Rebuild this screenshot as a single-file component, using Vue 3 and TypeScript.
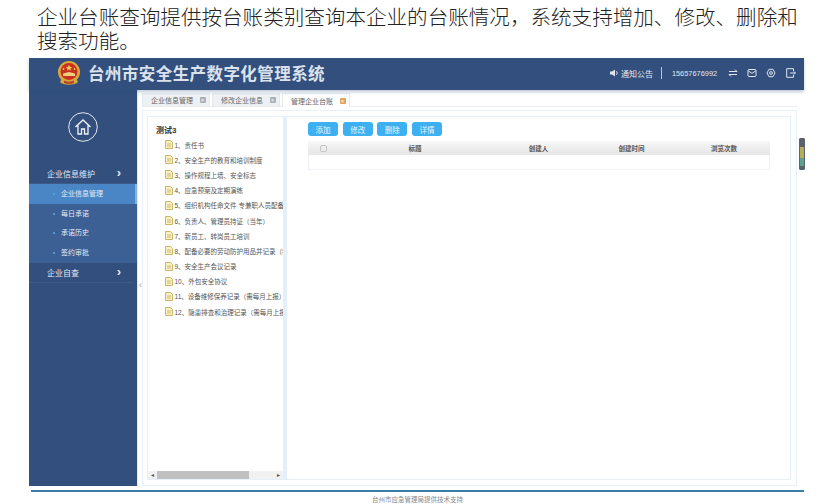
<template>
  <div class="page">
    <p class="intro">企业台账查询提供按台账类别查询本企业的台账情况，系统支持增加、修改、删除和搜索功能。</p>

    <div class="app">
      <header class="topbar">
        <div class="brand">
          <svg class="emblem" width="24" height="25" viewBox="0 0 24 25">
            <path d="M3 21c2.500 3.500 15.500 3.500 18 0l-1-2H4z" fill="#d8a63c" />
            <circle cx="12" cy="11" r="11" fill="#d9a93f" />
            <circle cx="12" cy="10.500" r="8.500" fill="#c8301f" />
            <path d="M12 3.500l.9 2.400h2.500l-2 1.500.8 2.400-2.200-1.500-2.200 1.500.8-2.400-2-1.500h2.500z" fill="#f2cf5a" />
            <circle cx="6.500" cy="8" r=".9" fill="#f2cf5a" />
            <circle cx="17.500" cy="8" r=".9" fill="#f2cf5a" />
            <path d="M6 15v-2.500l6-1.500 6 1.500V15z" fill="#efd07a" />
            <path d="M7 19.500c3 1.500 7 1.500 10 0v2.500c-3 1.200-7 1.200-10 0z" fill="#b8452c" />
          </svg>
          <span class="brand-name">台州市安全生产数字化管理系统</span>
        </div>
        <div class="tools">
          <svg class="tool-icon" width="10" height="10" viewBox="0 0 10 10">
            <path d="M1 3.500h2L6 1.500v7L3 6.500H1z" fill="#dfe6f0" />
            <path d="M7.500 3.200c.8 1 .8 2.600 0 3.600" stroke="#dfe6f0" fill="none" />
          </svg>
          <span class="notice">通知公告</span>
          <span class="sep"></span>
          <span class="phone">15657676992</span>
          <svg class="tool-icon" width="10" height="10" viewBox="0 0 10 10">
            <path d="M1 3.500h8L7 1.500M9 6.500H1l2 2" stroke="#dfe6f0" fill="none" />
          </svg>
          <svg class="tool-icon" width="10" height="10" viewBox="0 0 10 10">
            <rect x="1" y="1.500" width="8" height="7" rx="1" stroke="#dfe6f0" fill="none" />
            <path d="M1.500 3l3.500 2.400L8.500 3" stroke="#dfe6f0" fill="none" />
          </svg>
          <svg class="tool-icon" width="10" height="10" viewBox="0 0 10 10">
            <path d="M3 1.300h4L9 5 7 8.700H3L1 5z" stroke="#dfe6f0" fill="none" />
            <circle cx="5" cy="5" r="1.400" stroke="#dfe6f0" fill="none" />
          </svg>
          <svg class="tool-icon" width="10" height="10" viewBox="0 0 10 10">
            <path d="M7.500 3V.700H.700v8.600h6.800V7M4 5h5.400M7.800 3.400 9.400 5 7.800 6.600" stroke="#dfe6f0" fill="none" />
          </svg>
        </div>
      </header>

      <div class="body">
        <aside class="sidebar">
          <div class="home">
            <svg width="30" height="30" viewBox="0 0 30 30">
              <circle cx="15" cy="15" r="14.300" stroke="#e4e9f1" fill="none" />
              <path d="M7.500 15 15 8l7.500 7M10 13.500V22h3.500v-5h3v5H20v-8.500" stroke="#f2f5f9" stroke-width="1.300" fill="none" />
            </svg>
          </div>
          <div class="group">
            <span>企业信息维护</span>
            <span class="chevron">›</span>
          </div>
          <ul class="submenu">
            <li v-for="item in subItems" :key="item" :class="{ active: item === '企业信息管理' }">{{ item }}</li>
          </ul>
          <div class="group group-last">
            <span>企业自查</span>
            <span class="chevron">›</span>
          </div>
        </aside>

        <main class="content">
          <div class="collapse">‹</div>
          <div class="tabs">
            <div v-for="tab in tabs" :key="tab" class="tab" :class="{ current: tab === '管理企业台账' }">
              <span>{{ tab }}</span>
              <i class="tab-close">×</i>
            </div>
          </div>

          <div class="outer">
            <section class="tree">
              <div class="tree-list">
                <div class="tree-root">测试3</div>
                <div v-for="row in ledgers" :key="row" class="tree-row">
                  <svg width="8" height="9" viewBox="0 0 8 9">
                    <path d="M.5.500h5L7.500 2.500v6H.500z" fill="#f9f2c0" stroke="#c9b66a" />
                    <path d="M2 4h4M2 6h4" stroke="#c9b97a" />
                  </svg>
                  <span>{{ row }}</span>
                </div>
              </div>
              <div class="hscroll">
                <span class="arrow">◂</span>
                <span class="track"><span class="thumb"></span></span>
                <span class="arrow">▸</span>
              </div>
            </section>

            <section class="records">
              <div class="actions">
                <button v-for="a in actions" :key="a" type="button">{{ a }}</button>
              </div>
              <div class="table">
                <div class="thead">
                  <span><i class="check"></i></span>
                  <span v-for="c in columns" :key="c">{{ c }}</span>
                </div>
                <div class="tbody"></div>
              </div>
            </section>
          </div>
        </main>
      </div>
      <div class="handle"></div>
    </div>

    <footer class="foot">台州市应急管理局提供技术支持</footer>
  </div>
</template>

<script setup lang="ts">
const subItems: string[] = ['企业信息管理', '每日承诺', '承诺历史', '签约审批'];
const tabs: string[] = ['企业信息管理', '修改企业信息', '管理企业台账'];
const actions: string[] = ['添加', '修改', '删除', '详情'];
const columns: string[] = ['标题', '创建人', '创建时间', '浏览次数'];
const ledgers: string[] = [
  '1、责任书',
  '2、安全生产的教育和培训制度',
  '3、操作规程上墙、安全标志',
  '4、应急预案及定期演练',
  '5、组织机构任命文件 专兼职人员配备',
  '6、负责人、管理员持证（当年）',
  '7、新员工、转岗员工培训',
  '8、配备必要的劳动防护用品并记录（每',
  '9、安全生产会议记录',
  '10、外包安全协议',
  '11、设备维修保养记录（需每月上报）',
  '12、隐患排查和治理记录（需每月上报',
];
</script>

<style>
html,
body {
  background: #fff;
  overflow: hidden;
}
</style>

<style scoped>
.page {
  width: 821px;
  height: 504px;
  overflow: hidden;
  font-family: "Liberation Sans", "Noto Sans CJK SC", sans-serif;
  color: #444;
}

.intro {
  margin: 0;
  padding: 6px 20px 0 37px;
  height: 58px;
  box-sizing: border-box;
  font-size: 20.570px;
  line-height: 24px;
  font-weight: 300;
  color: #222;
  font-family: "Liberation Serif", "Noto Sans CJK SC", serif;
}

.app {
  position: relative;
  width: 775px;
  margin-left: 29px;
  height: 428px;
  display: flex;
  flex-direction: column;
}

.topbar {
  height: 32px;
  flex: none;
  background: #324f7d;
  box-shadow: 0 2px 3px rgba(50, 79, 125, 0.3);
  display: flex;
  justify-content: space-between;
  align-items: center;
  padding: 0 8.500px 2px 28px;
  box-sizing: border-box;
  position: relative;
  z-index: 1;
}

.brand {
  display: flex;
  align-items: center;
  gap: 7px;
}

.brand-name {
  font-size: 16.500px;
  font-weight: 700;
  letter-spacing: 0.430px;
  color: #dbe2ec;
}

.tools {
  display: flex;
  align-items: center;
  color: #e4e9f1;
  font-size: 8px;
}

.notice {
  margin-left: 2px;
}

.sep {
  width: 1px;
  height: 12px;
  background: #b9c6d9;
  margin: 0 10px 0 8px;
}

.phone {
  font-size: 7.400px;
  margin-right: 10.500px;
  white-space: nowrap;
}

.tool-icon + .tool-icon {
  margin-left: 9.300px;
}

.body {
  flex: 1;
  display: flex;
  min-height: 0;
}

.sidebar {
  width: 108px;
  flex: none;
  background: #324f7d;
  color: #e6ebf3;
  font-size: 8px;
}

.home {
  display: flex;
  justify-content: center;
  padding: 22px 0 21px;
  height: 73px;
  box-sizing: border-box;
  margin-left: -1px;
}

.group {
  height: 21px;
  display: flex;
  justify-content: space-between;
  align-items: center;
  padding: 0 16px 0 18px;
  border-bottom: 1px solid #3e5a86;
  box-sizing: border-box;
}

.group-last {
  height: 20px;
  margin-right: 5px;
  padding-right: 11px;
}

.chevron {
  font-size: 13px;
  line-height: 10px;
  font-weight: 700;
}

.submenu {
  list-style: none;
  margin: 0;
  padding: 0;
  background: #3c5f94;
}

.submenu li {
  height: 19.700px;
  line-height: 19.700px;
  padding-left: 32px;
  position: relative;
  font-size: 7px;
}

.submenu li::before {
  content: "";
  position: absolute;
  left: 24px;
  top: 9px;
  width: 2px;
  height: 2px;
  border-radius: 50%;
  background: #62a9e0;
}

.submenu li.active {
  background: #4a86c5;
  border-right: 2px solid #7fb2e2;
}

.content {
  flex: 1;
  min-width: 0;
  position: relative;
  background: #fff;
  border-left: 1px solid #e3e9f0;
  display: flex;
  flex-direction: column;
}

.collapse {
  position: absolute;
  left: 0;
  top: 190px;
  font-size: 9px;
  line-height: 10px;
  color: #999;
  padding-left: 1px;
}

.tabs {
  display: flex;
  height: 13px;
  margin: 3px 7px 0 4px;
  border-bottom: 1px solid #e8edf2;
  flex: none;
}

.tab {
  display: flex;
  align-items: center;
  justify-content: space-between;
  height: 13px;
  width: 67.500px;
  padding: 0 3px 0 8px;
  margin-right: 2.500px;
  background: #eef1f4;
  color: #666;
  font-size: 7px;
  box-sizing: border-box;
  border: 1px solid #e5e9ee;
  border-bottom: none;
  white-space: nowrap;
}

.tab.current {
  background: #fff;
  height: 14px;
}

.tab-close {
  width: 6px;
  height: 6px;
  background: #a9b0b8;
  border-radius: 1px;
  font-size: 6px;
  line-height: 6px;
  color: #fff;
  text-align: center;
  font-style: normal;
}

.tab.current .tab-close {
  background: #e2a35c;
}

.outer {
  flex: 1;
  min-height: 0;
  margin: 3px 7px 0 4px;
  border: 1px solid #e8f1f9;
  padding: 5px 5px 5px 4px;
  display: flex;
}

.tree {
  width: 140px;
  flex: none;
  box-sizing: border-box;
  border: 1px solid #e6f0f9;
  border-right: 4px solid #e4eff9;
  display: flex;
  flex-direction: column;
  overflow: hidden;
}

.tree-list {
  flex: 1;
  padding: 7px 0 0 8px;
  white-space: nowrap;
  overflow: hidden;
}

.tree-root {
  font-size: 8px;
  font-weight: 700;
  color: #333;
  height: 13px;
  line-height: 13px;
}

.tree-row {
  display: flex;
  align-items: center;
  gap: 1.500px;
  height: 15.200px;
  padding-left: 9px;
  font-size: 6.500px;
  color: #555;
}

.tree-row svg {
  flex: none;
}

.hscroll {
  height: 8px;
  background: #f1f1f1;
  display: flex;
  align-items: center;
  flex: none;
  color: #555;
  font-size: 6px;
}

.arrow {
  width: 9px;
  text-align: center;
  line-height: 8px;
}

.track {
  flex: 1;
  height: 100%;
}

.thumb {
  display: block;
  width: 92px;
  height: 100%;
  background: #c1c1c1;
}

.records {
  flex: 1;
  min-width: 0;
  border: 1px solid #e6f0f9;
  border-left: none;
  padding: 5px 20px 0 21px;
}

.actions {
  display: flex;
  gap: 4.670px;
}

.actions button {
  width: 30px;
  height: 14px;
  padding: 0;
  border: none;
  border-radius: 3px;
  background: #3cb0f0;
  color: #e8f5fd;
  font-size: 7.500px;
  font-family: inherit;
}

.table {
  margin-top: 5px;
  width: 462px;
}

.thead {
  display: grid;
  grid-template-columns: 30px 154px 93px 93px 92px;
  height: 14px;
  align-items: center;
  background: linear-gradient(#f7f7f7, #e6e6e6);
  font-size: 6.500px;
  font-weight: 700;
  color: #555;
  text-align: center;
}

.check {
  display: inline-block;
  width: 7px;
  height: 7px;
  border: 1px solid #c4c4c4;
  border-radius: 2px;
  background: #eee;
  vertical-align: middle;
  box-sizing: border-box;
}

.tbody {
  height: 14px;
  border: 1px solid #eef2f6;
  border-top: none;
}

.handle {
  position: absolute;
  right: -1px;
  top: 80px;
  width: 6px;
  height: 32px;
  border-radius: 1px;
  box-sizing: border-box;
  border: 1px solid #5a636c;
  background: linear-gradient(#5a636c 0 25%, #b5ac5c 25% 62%, #5f9d8c 62% 90%, #5a636c 90%);
}

.foot {
  margin: 4px 17px 0 31px;
  border-top: 2px solid #3a7ba8;
  padding-top: 3px;
  text-align: center;
  font-size: 6.500px;
  line-height: 10px;
  color: #888;
}
</style>
